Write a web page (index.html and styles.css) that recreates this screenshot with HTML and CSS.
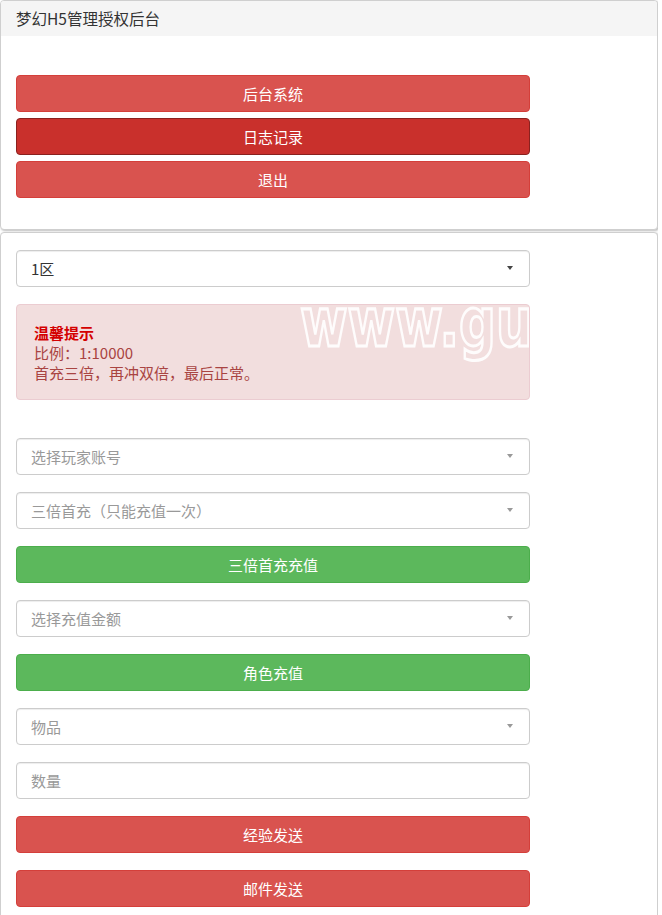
FILE: index.html
```html
<!DOCTYPE html>
<html lang="zh-CN">
<head>
    <meta charset="UTF-8">
    <meta name="viewport" content="width=device-width, initial-scale=1.0">
    <title>梦幻H5管理授权后台</title>
    <link rel="stylesheet" href="styles.css">
</head>
<body>

    <!-- 顶部菜单 -->
    <div class="panel">
        <div class="panel-heading">梦幻H5管理授权后台</div>
        <div class="panel-body menu">
            <a href="#" class="btn btn-danger">后台系统</a>
            <a href="#" class="btn btn-danger active">日志记录</a>
            <a href="#" class="btn btn-danger">退出</a>
        </div>
    </div>

    <!-- 充值表单 -->
    <div class="panel panel-main">
        <div class="panel-body">
            <div class="form-group select-wrap">
                <select class="form-control">
                    <option>1区</option>
                    <option>2区</option>
                </select>
            </div>

            <div class="alert">
                <span class="watermark">www.guo</span>
                <strong>温馨提示</strong><br>
                比例：1:10000<br>
                首充三倍，再冲双倍，最后正常。
            </div>

            <div class="form-group select-wrap muted spaced">
                <select class="form-control empty">
                    <option selected>选择玩家账号</option>
                </select>
            </div>
            <div class="form-group select-wrap muted">
                <select class="form-control empty">
                    <option selected>三倍首充（只能充值一次）</option>
                </select>
            </div>
            <div class="form-group">
                <button class="btn btn-success">三倍首充充值</button>
            </div>
            <div class="form-group select-wrap muted">
                <select class="form-control empty">
                    <option selected>选择充值金额</option>
                </select>
            </div>
            <div class="form-group">
                <button class="btn btn-success">角色充值</button>
            </div>
            <div class="form-group select-wrap muted">
                <select class="form-control empty">
                    <option selected>物品</option>
                </select>
            </div>
            <div class="form-group">
                <input type="text" class="form-control" placeholder="数量">
            </div>
            <div class="form-group">
                <button class="btn btn-danger">经验发送</button>
            </div>
            <div class="form-group">
                <button class="btn btn-danger">邮件发送</button>
            </div>
        </div>
    </div>

</body>
</html>
```

FILE: styles.css
```css
* {
    margin: 0;
    padding: 0;
    box-sizing: border-box;
    font-family: "Noto Sans CJK SC", "Liberation Sans", sans-serif;
}
body {
    background: #fff;
    color: #333;
    font-size: 15px;
    width: 658px;
}


.panel {
    background: #fff;
    border: 1px solid #cfcfcf;
    border-radius: 4px;
    box-shadow: 1px 1px 2px rgba(0, 0, 0, 0.25);
    margin-bottom: 2px;
    overflow: hidden;
}
.panel-heading {
    background: #f5f5f5;
    height: 35px;
    line-height: 34px;
    padding: 0 15px;
    font-size: 15.5px;
    color: #333;
}
.panel-body {
    padding: 17px 15px;
}
.menu {
    padding-top: 39px;
    padding-bottom: 31px;
    display: flex;
    flex-direction: column;
    gap: 6px;
}


.btn {
    display: block;
    width: 514px;
    height: 37px;
    line-height: 35px;
    border: 1px solid transparent;
    border-radius: 4px;
    color: #fff;
    font-size: 15px;
    text-align: center;
    text-decoration: none;
    cursor: pointer;
}
.btn-danger {
    background: #d9534f;
    border-color: #d43f3a;
}
.btn-danger.active {
    background: #c9302c;
    border-color: #8a211e;
}
.btn-success {
    background: #5cb85c;
    border-color: #4cae4c;
}


.form-group {
    margin-bottom: 17px;
}
.form-group.spaced {
    margin-top: 38px;
}
.form-control {
    display: block;
    width: 514px;
    height: 37px;
    padding: 0 14px;
    font-size: 15px;
    color: #333;
    background: #fff;
    border: 1px solid #ccc;
    border-radius: 4px;
    box-shadow: inset 0 1px 1px rgba(0, 0, 0, 0.075);
    outline: none;
}
select.form-control {
    appearance: none;
    -webkit-appearance: none;
}
.form-control.empty,
.form-control::placeholder {
    color: #999;
}
.select-wrap {
    position: relative;
    width: 514px;
}
.select-wrap::after {
    content: "";
    position: absolute;
    right: 17px;
    top: 16px;
    border-left: 3.5px solid transparent;
    border-right: 3.5px solid transparent;
    border-top: 4px solid #444;
}
.select-wrap.muted::after {
    border-top-color: #999;
}


.alert {
    position: relative;
    width: 514px;
    height: 96px;
    padding: 18px 17px;
    background: #f2dede;
    border: 1px solid #ebccd1;
    border-radius: 4px;
    color: #a94442;
    line-height: 20px;
    overflow: hidden;
}
.alert strong {
    color: #d40000;
}
.watermark {
    position: absolute;
    left: 283px;
    top: -22px;
    font-family: "DejaVu Sans", sans-serif;
    font-weight: bold;
    font-size: 56px;
    line-height: normal;
    letter-spacing: 0;
    color: transparent;
    -webkit-text-stroke: 2.5px rgba(255, 255, 255, 0.9);
    white-space: nowrap;
    transform: scale(0.92, 1.22);
    transform-origin: top left;
}
```
